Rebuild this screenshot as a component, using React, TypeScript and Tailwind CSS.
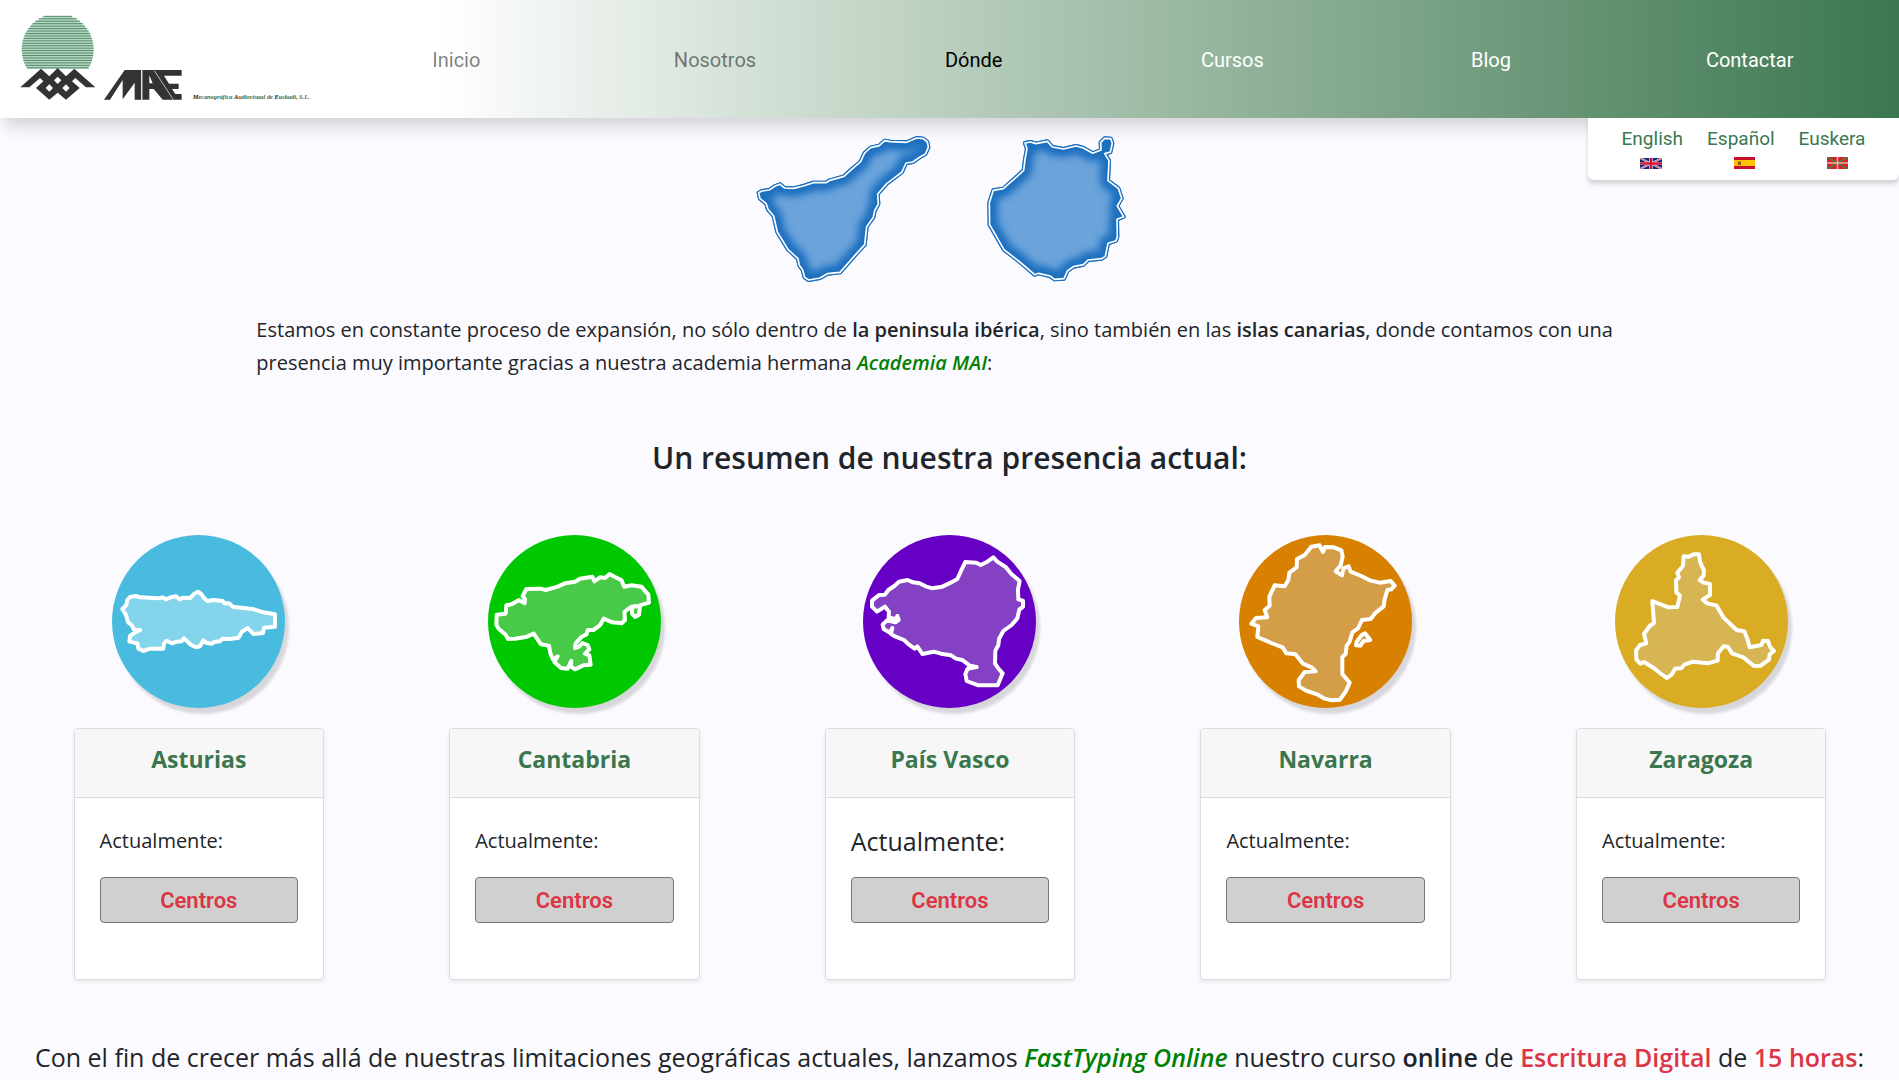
import React from "react";

const navItems = [
  { label: "Inicio", color: "text-black/50" },
  { label: "Nosotros", color: "text-black/50" },
  { label: "Dónde", color: "text-black" },
  { label: "Cursos", color: "text-white" },
  { label: "Blog", color: "text-white" },
  { label: "Contactar", color: "text-white" },
];

const regions = [
  {
    name: "Asturias",
    circle: "bg-[#48bbdf]",
    note: "text-xl",
    viewBox: "36 45 519 519",
    fill: "#84d4ec",
    paths: [
      "M67 267L79 255L82 240L90 231L108 228L120 232L175 235L188 232L197 238L212 232L228 229L238 238L250 233L270 234L282 222L294 215L304 222L312 234L322 243L340 240L368 243L374 250L388 250L398 260L430 264L462 268L490 277L525 283L525 320L492 323L489 339L460 342L443 324L425 336L416 353L390 357L368 356L360 364L345 365L335 371L318 368L310 361L300 379L288 382L272 374L252 355L245 364L230 365L216 370L200 362L192 370L190 386L150 386L130 393L115 386L112 370L88 365L90 348L104 338L120 330L102 329L95 315L84 307L78 285Z",
    ],
  },
  {
    name: "Cantabria",
    circle: "bg-[#00c800]",
    note: "text-xl",
    viewBox: "39 45 519 519",
    fill: "#48ca48",
    paths: [
      "M65 284L92 281L94 256L110 253L132 240L149 250L150 237L143 228L154 207L196 206L212 210L248 200L270 190L300 185L315 176L352 170L358 184L375 172L390 174L404 162L420 171L440 181L447 200L470 196L500 200L510 213L520 223L522 248L495 256L492 284L480 291L471 281L470 260L486 258L463 264L448 276L450 300L440 310L412 307L386 296L375 316L355 330L338 330L335 343L318 352L302 370L300 384L312 380L322 369L338 375L343 388L330 401L343 406L347 434L325 436L300 448L288 440L289 422L278 446L258 444L238 426L248 409L234 418L226 400L222 377L198 373L176 341L156 350L120 356L99 357L92 344L71 326L64 314Z",
    ],
  },
  {
    name: "País Vasco",
    circle: "bg-[#6600c4]",
    note: "text-[25px]",
    viewBox: "42 45 519 519",
    fill: "#8441c4",
    paths: [
      "M69 242L90 225L108 224L118 210L136 198L150 185L176 180L192 187L212 190L230 199L250 205L280 200L305 188L325 177L338 148L349 126L382 128L395 135L415 125L433 112L445 125L470 141L488 163L512 183L507 208L508 238L522 242L522 260L511 269L505 295L488 315L463 333L450 357L448 376L439 392L438 430L447 444L461 460L446 496L388 496L353 483L349 462L356 446L383 441L362 437L340 420L321 416L306 406L276 401L254 395L220 402L205 379L197 386L180 374L165 360L140 350L126 342L130 324L122 338L104 327L101 314L114 301L139 307L149 300L145 288L139 297L119 292L120 275L108 260L84 275L69 260Z",
    ],
  },
  {
    name: "Navarra",
    circle: "bg-[#d88000]",
    note: "text-xl",
    viewBox: "43 45 519 519",
    fill: "#d49d48",
    paths: [
      "M260 80L285 76L295 96L301 81L328 82L350 91L354 110L348 136L333 154L352 166L356 145L372 139L378 155L410 168L438 182L465 188L498 183L510 197L500 208L488 210L480 238L477 259L452 279L438 297L412 300L400 325L383 337L375 365L366 377L363 402L353 411L353 462L375 488L364 513L346 539L322 541L300 536L277 523L244 512L223 499L222 480L240 456L273 454L262 443L235 431L212 403L185 400L174 382L140 369L98 351L101 319L80 311L94 294L128 292L120 270L135 257L134 230L150 196L180 199L191 180L194 158L216 142L217 117L240 105Z",
      "M410 346L421 340L437 360L417 363L407 377L394 376L396 365Z",
    ],
  },
  {
    name: "Zaragoza",
    circle: "bg-[#d9ac23]",
    note: "text-xl",
    viewBox: "45 45 519 519",
    fill: "#d7b552",
    paths: [
      "M251 109L266 110L281 103L297 103L300 125L312 152L311 167L299 180L311 188L330 192L330 225L308 239L322 250L350 257L370 292L410 330L433 334L443 359L449 382L484 375L489 362L504 363L511 382L522 393L509 403L507 419L482 437L462 438L430 412L396 400L384 381L371 379L354 400L353 422L323 430L279 425L253 434L244 445L225 446L215 464L200 474L180 459L160 443L132 426L121 431L109 418L108 391L120 375L139 370L132 342L149 318L162 309L157 243L176 251L205 262L232 261L240 227L229 217L228 181L237 172L232 158L249 137Z",
    ],
  },
];

function Logo() {
  const lines = Array.from({ length: 22 }, (_, i) => {
    const y = 49 + i * 7.35;
    const half = Math.max(36, Math.sqrt(Math.max(0, 108 * 108 - (y - 148) * (y - 148))));
    return { y, x1: 173 - half, x2: 173 + half };
  });
  return (
    <svg viewBox="0 0 1020 354" className="h-[118px] w-[340px]" role="img" aria-label="MAE">
      <path d="M137 48H209A108 108 0 0 1 264 207H82A108 108 0 0 1 137 48Z" fill="#b9d6c4" />
      {lines.map((l) => (
        <line key={l.y} x1={l.x1} x2={l.x2} y1={l.y} y2={l.y} stroke="#4f8e69" strokeWidth="3" />
      ))}
      <path
        fill="#333"
        fillRule="evenodd"
        d="M61 262L123 206L148 229L173 204L198 229L223 206L286 262H258L226 234L216 244L239 264L198 299L173 278L148 299L108 264L130 244L120 234L88 262ZM173 230L162 241L173 252L184 241ZM148 253L137 264L148 275L159 264ZM198 253L187 264L198 275L209 264Z"
      />
      <path
        fill="#333"
        fillRule="evenodd"
        d="M312 299L374 210H424V299H404V248L368 298V240L330 299ZM427 210H545V227H492L507 251H536V267H516L526 282H545V299H488L461 267H448V299H427ZM448 226V250H458Z"
      />
      <path d="M463 212L520 299M425 210V299" stroke="#fff" strokeWidth="2" />
      <text x="578" y="298" fontFamily="Liberation Serif" fontSize="19" fontStyle="italic" fontWeight="700" fill="#3c6a4c">
        <tspan fill="#111">M</tspan>ecanográfica <tspan fill="#111">A</tspan>udiovisual de <tspan fill="#111">E</tspan>uskadi, S.L.
      </text>
    </svg>
  );
}

const islands = [
  {
    id: "tenerife",
    d: "M56 218L66 213L88 210L104 199L120 193L134 204L160 205L190 198L220 188L258 188L270 181L312 169L335 148L362 125L374 99L392 83L418 77L434 62L450 65L500 67L530 54L550 56L562 66L565 82L556 102L540 111L518 126L498 129L486 156L464 173L440 191L413 222L415 252L404 272L400 292L380 320L374 374L350 400L300 457L262 461L240 474L206 480L194 472L188 450L178 436L174 416L144 388L112 336L101 288L84 268L78 250L60 236Z",
  },
  {
    id: "gran-canaria",
    d: "M855 69L872 66L888 71L922 64L937 81L970 87L1008 78L1030 84L1058 100L1083 90L1082 67L1094 55L1112 56L1117 70L1111 96L1094 101L1107 122L1104 182L1135 205L1145 235L1132 258L1151 290L1131 298L1132 350L1128 362L1104 370L1096 409L1085 416L1044 420L1030 434L1000 440L982 453L972 476L944 478L930 468L896 460L884 464L836 423L792 389L749 314L748 248L760 211L790 206L835 166L851 151L855 118L861 86Z",
  },
];

function Islands() {
  return (
    <svg viewBox="0 0 1200 510" className="h-[170px] w-[400px]" role="img" aria-label="Islas Canarias">
      <filter id="soft" x="-10%" y="-10%" width="120%" height="120%">
        <feGaussianBlur stdDeviation="11" />
      </filter>
      {islands.map((s) => (
        <g key={s.id} strokeLinejoin="round">
          <clipPath id={s.id}>
            <path d={s.d} />
          </clipPath>
          <path d={s.d} fill="#6ba3db" stroke="#176cb9" strokeWidth="12" />
          <g clipPath={`url(#${s.id})`}>
            <path d={s.d} fill="none" stroke="#1c70c0" strokeWidth="50" filter="url(#soft)" />
          </g>
          <path d={s.d} fill="none" stroke="#1c70c0" strokeWidth="12" />
          <path d={s.d} fill="none" stroke="#fff" strokeWidth="5" />
        </g>
      ))}
    </svg>
  );
}

function FlagUK() {
  return (
    <svg viewBox="0 0 44 24" preserveAspectRatio="none" className="h-[11px] w-[22px]" aria-hidden="true">
      <path fill="#0a2a80" d="M0 0h44v24H0z" />
      <path d="M0 0L44 24M44 0L0 24" stroke="#fff" strokeWidth="4" />
      <path d="M0 0L44 24M44 0L0 24" stroke="#d01030" strokeWidth="1.5" />
      <path d="M22 0V24M0 12H44" stroke="#fff" strokeWidth="7" />
      <path d="M22 0V24M0 12H44" stroke="#d01030" strokeWidth="5" />
    </svg>
  );
}

function FlagSpain() {
  return (
    <svg viewBox="0 0 42 24" className="h-3 w-[21px]" aria-hidden="true">
      <path fill="#c8102e" d="M0 0h42v24H0z" />
      <path fill="#fcc400" d="M0 6h42v12H0z" />
      <path fill="#a0522d" d="M8 9h6v7H8z" />
    </svg>
  );
}

function FlagBasque() {
  return (
    <svg viewBox="0 0 42 24" className="h-3 w-[21px]" aria-hidden="true">
      <path fill="#da2128" d="M0 0h42v24H0z" />
      <path d="M0 0L42 24M42 0L0 24" stroke="#3a8a45" strokeWidth="3" />
      <path d="M21 0V24M0 12H42" stroke="#f4b0a8" strokeWidth="3" />
    </svg>
  );
}

export default function App() {
  return (
    <div className="h-screen overflow-hidden bg-[#fbfaff] font-['Open_Sans',sans-serif] text-[#212529]">
      <header className="relative z-10 flex h-[118px] bg-linear-to-r from-white from-23% to-[#3a774f] pr-5 shadow-[4px_8px_16px_rgba(0,0,0,0.16)]">
        <a href="#inicio" className="w-[327px] shrink-0">
          <Logo />
        </a>
        <nav className="grid flex-1 grid-cols-6 items-center pt-0.5 text-center font-[Roboto,sans-serif] text-xl">
          {navItems.map((item) => (
            <a key={item.label} href="#" className={item.color}>
              {item.label}
            </a>
          ))}
        </nav>
        <div className="absolute top-full right-0 w-[311px] rounded-b-md bg-white pt-2 pb-1.5 shadow-[0_4px_4px_rgba(0,0,0,0.16)]">
          <div className="flex justify-center gap-6 font-[Roboto,sans-serif] text-[19px] leading-[26px] text-[#3a774f]">
            <a href="#en">English</a>
            <a href="#es">Español</a>
            <a href="#eu">Euskera</a>
          </div>
          <div className="flex h-[22px] items-center justify-center gap-[72px]">
            <FlagUK />
            <FlagSpain />
            <FlagBasque />
          </div>
        </div>
      </header>

      <main>
        <div className="flex justify-center pt-[2px] pr-[19px]">
          <Islands />
        </div>
        <p className="mx-auto mt-[23px] w-[73%] text-xl leading-[33px]">
          Estamos en constante proceso de expansión, no sólo dentro de{" "}
          <strong className="font-semibold">la peninsula ibérica</strong>, sino también en las{" "}
          <strong className="font-semibold">islas canarias</strong>, donde contamos con una presencia muy
          importante gracias a nuestra academia hermana{" "}
          <em className="font-semibold text-[#008000]">Academia MAI</em>:
        </p>
        <h1 className="mt-[61px] text-center text-3xl font-semibold">Un resumen de nuestra presencia actual:</h1>

        <section className="mt-[59px] grid grid-cols-5 pr-[10px] pl-[11px]">
          {regions.map((r) => (
            <div key={r.name} className="flex flex-col items-center">
              <div className={`size-[173px] rounded-full shadow-[4px_6px_3px_rgba(0,0,0,0.14)] ${r.circle}`}>
                <svg viewBox={r.viewBox} className="size-full" role="img" aria-label={`Mapa de ${r.name}`}>
                  {r.paths.map((d) => (
                    <path key={d} d={d} fill={r.fill} stroke="#fff" strokeWidth="12" strokeLinejoin="round" />
                  ))}
                </svg>
              </div>
              <article className="mt-5 h-[252px] w-2/3 overflow-hidden rounded border border-[#dcdcde] bg-white shadow-[0_2px_4px_rgba(0,0,0,0.08)]">
                <h2 className="h-[69px] border-b border-[#d9d9d9] bg-[#f7f7f7] pt-3 text-center text-[23px] leading-9 font-bold text-[#3a774f]">
                  {r.name}
                </h2>
                <div className="px-[25px] pt-[25px]">
                  <p className={`leading-9 ${r.note}`}>Actualmente:</p>
                  <button
                    type="button"
                    className="mt-[18px] h-[46px] w-full rounded border border-[#767676] bg-[#d0d0d0] font-[Roboto,sans-serif] text-[22px] font-semibold text-[#dc3545]"
                  >
                    Centros
                  </button>
                </div>
              </article>
            </div>
          ))}
        </section>

        <p className="mt-[57px] text-center text-[25px] leading-10">
          Con el fin de crecer más allá de nuestras limitaciones geográficas actuales, lanzamos{" "}
          <em className="font-semibold text-[#008000]">FastTyping Online</em> nuestro curso{" "}
          <strong className="font-semibold">online</strong> de{" "}
          <strong className="font-semibold text-[#dc3545]">Escritura Digital</strong> de{" "}
          <strong className="font-semibold text-[#dc3545]">15 horas</strong>:
        </p>
      </main>
    </div>
  );
}
